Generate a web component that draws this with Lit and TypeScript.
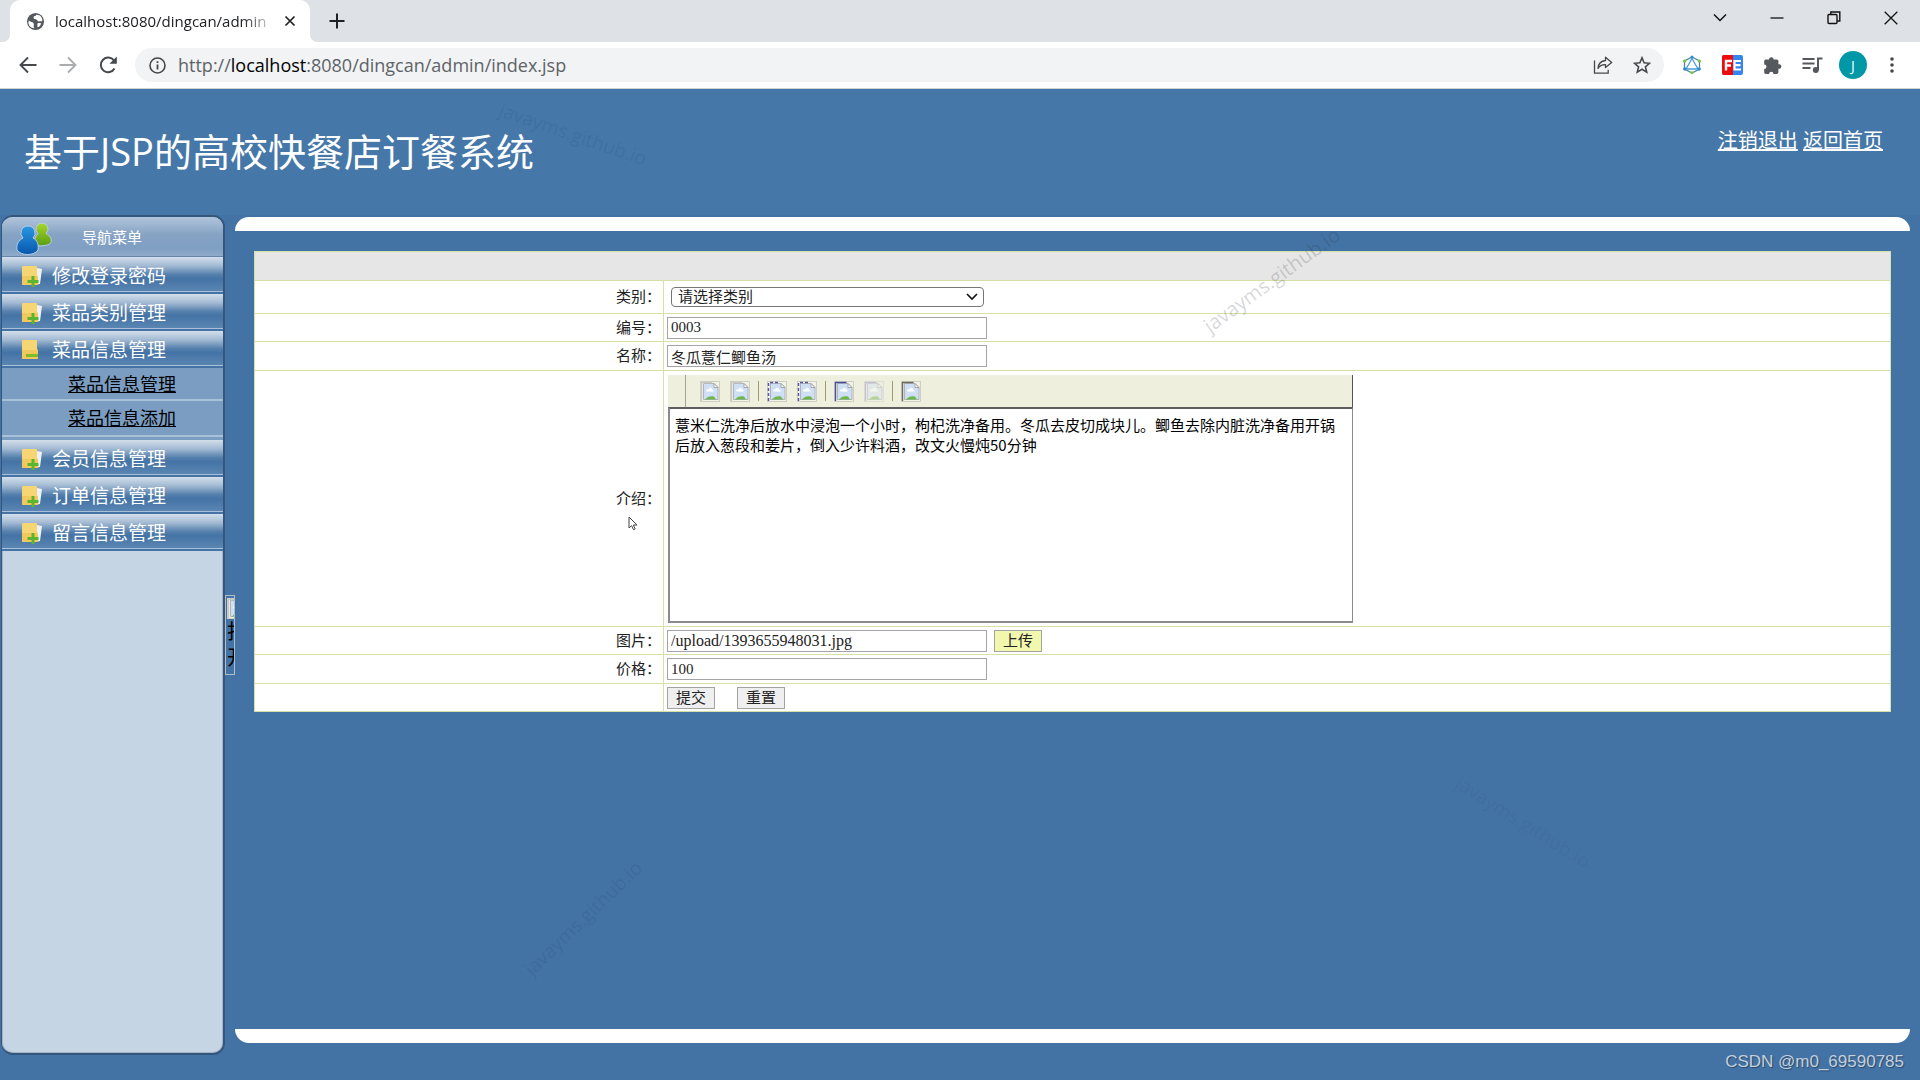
import { LitElement, html, css, svg, nothing } from "lit";
import { customElement, property } from "lit/decorators.js";

const sans = css`"Open Sans", "Noto Sans CJK SC", sans-serif`;

/* ---------- Browser frame ---------- */

@customElement("browser-bar")
class BrowserBar extends LitElement {
  static styles = css`
    :host { display: block; font-family: ${sans}; color: #202124; }
    button { border: 0; background: none; padding: 0; margin: 0; color: #45494d; display: grid; place-items: center; flex: none; font: inherit; }
    svg { display: block; }
    .tabs { height: 42px; background: #dee1e6; display: flex; align-items: stretch; padding: 0 1px 0 10px; }
    .tab { width: 300px; box-sizing: border-box; background: #fff; border-radius: 10px 10px 0 0; display: flex; align-items: center; padding: 0 14px 0 16px; position: relative; }
    .tab::before, .tab::after { content: ""; position: absolute; bottom: 0; width: 8px; height: 8px; }
    .tab::before { left: -8px; background: radial-gradient(circle at 0 0, transparent 8px, #fff 8px); }
    .tab::after { right: -8px; background: radial-gradient(circle at 100% 0, transparent 8px, #fff 8px); }
    .name { flex: 1; min-width: 0; margin: 0 8px 0 10px; font-size: 15px; line-height: 20px; white-space: nowrap; overflow: hidden;
      -webkit-mask-image: linear-gradient(90deg, #000 85%, transparent); mask-image: linear-gradient(90deg, #000 85%, transparent); }
    .dark { color: #202124; }
    .new { width: 54px; }
    .space { flex: 1; }
    .win { width: 57px; height: 36px; color: #111; }
    .tools { height: 46px; background: #fff; display: flex; align-items: center; border-bottom: 1px solid #cfd3d4; padding: 0 14px 0 12px; }
    .nav { width: 40px; margin-right: 0; height: 34px; }
    .nav.back { width: 32px; margin-right: 4px; }
    .off { color: #aaacae; }
    .address { flex: 1; height: 34px; border-radius: 17px; background: #f1f3f4; display: flex; align-items: center; padding: 0 12px 0 14px; margin: 0 8px 0 7px; }
    .url { flex: 1; margin-left: 13px; font-size: 18px; line-height: 24px; color: #606368; white-space: nowrap; }
    .url b { font-weight: 400; color: #000; }
    .address button { width: 40px; }
    .address .star { width: 20px; margin-left: 9px; }
    .address .info { width: 16px; }
    .ext { width: 40px; height: 34px; }
    .avatar { width: 28px; height: 28px; border-radius: 50%; background: #0097a7; color: #fff; font-size: 14px; margin: 0 7px; }
    .more { width: 20px; margin: 0 4px 0 8px; }
  `;
  render() {
    return html`
      <div class="tabs">
        <div class="tab">
          <svg width="19" height="19" viewBox="0 0 20 20"><circle cx="10" cy="10" r="9" fill="#55585d"/><path d="M3 9c2 2 4 1 5 3s-1 3 1 5c-4 0-6.500-3-6.500-6zM11 3c-1 2-3 1-3 3s3 1 4 3 3 0 5 1c1-4-2-7-6-7zM12 12c2-1 4 0 4 0-1 3-3 4-4 4z" fill="#fff"/></svg>
          <span class="name">localhost:8080/dingcan/admin</span>
          <button class="dark" aria-label="关闭标签页"><svg width="12" height="12" viewBox="0 0 12 12" stroke="currentColor" stroke-width="1.700"><path d="M1.500 1.500l9 9M10.500 1.500l-9 9"/></svg></button>
        </div>
        <button class="new dark" aria-label="新标签页"><svg width="16" height="16" viewBox="0 0 16 16" stroke="currentColor" stroke-width="2"><path d="M8 0.500v15M0.500 8h15"/></svg></button>
        <div class="space"></div>
        <button class="win" aria-label="搜索标签页"><svg width="14" height="10" viewBox="0 0 14 10" fill="none" stroke="currentColor" stroke-width="1.500"><path d="M1 1.500l6 6 6-6"/></svg></button>
        <button class="win" aria-label="最小化"><svg width="14" height="10" viewBox="0 0 14 10" stroke="currentColor" stroke-width="1.300"><path d="M0.500 5h13"/></svg></button>
        <button class="win" aria-label="还原"><svg width="14" height="14" viewBox="0 0 14 14" fill="none" stroke="currentColor" stroke-width="1.400"><rect x="1" y="3.500" width="9" height="9" rx="1"/><path d="M3.800 3.500V1h9v9h-2.600"/></svg></button>
        <button class="win" aria-label="关闭"><svg width="14" height="14" viewBox="0 0 14 14" stroke="currentColor" stroke-width="1.300"><path d="M0.700 0.700l12.600 12.600M13.300 0.700L0.700 13.300"/></svg></button>
      </div>
      <div class="tools">
        <button class="nav back" aria-label="后退"><svg width="18" height="18" viewBox="0 0 18 18" fill="none" stroke="currentColor" stroke-width="1.900"><path d="M17.500 9H2M9 1.500L1.500 9 9 16.500"/></svg></button>
        <button class="nav off" aria-label="前进"><svg width="18" height="18" viewBox="0 0 18 18" fill="none" stroke="currentColor" stroke-width="1.900"><path d="M0.500 9H16M9 1.500L16.500 9 9 16.500"/></svg></button>
        <button class="nav" aria-label="重新加载"><svg width="19" height="18" viewBox="0 0 19 18" fill="none" stroke="currentColor" stroke-width="2"><path d="M15.500 12.500A7.300 7.300 0 1 1 15 4.500"/><path d="M17.800 0.500v7.300h-7.300z" fill="currentColor" stroke="none"/></svg></button>
        <div class="address">
          <button class="info" aria-label="网站信息"><svg width="17" height="17" viewBox="0 0 17 17" fill="none" stroke="currentColor" stroke-width="1.600"><circle cx="8.500" cy="8.500" r="7.500"/><path d="M8.500 7.500v5M8.500 4.300v1.800" stroke-width="1.800"/></svg></button>
          <span class="url">http://<b>localhost</b>:8080/dingcan/admin/index.jsp</span>
          <button class="share" aria-label="分享"><svg width="20" height="18" viewBox="0 0 20 18" fill="none" stroke="currentColor" stroke-width="1.300"><path d="M1.500 4.500v12.700h13.700v-3.500"/><path d="M12.500 1.200L18.700 6.500l-6.200 5V8.700C9 8.500 6.800 9.500 5 12.500c.3-4.500 3-7.600 7.500-8z" stroke-linejoin="round"/></svg></button>
          <button class="star" aria-label="收藏"><svg width="18" height="18" viewBox="0 0 18 18" fill="none" stroke="currentColor" stroke-width="1.600"><path d="M9 1.800l2.100 5 5.400.5-4.100 3.500 1.300 5.300L9 13.300l-4.700 2.800 1.300-5.300L1.500 7.300l5.400-.5z"/></svg></button>
        </div>
        <button class="ext" aria-label="扩展 A"><svg width="20" height="20" viewBox="0 0 20 20" fill="none"><path d="M10 2l7.500 4v8L10 18l-7.500-4V6z" stroke="#4f8a9c" stroke-width="1.300"/><path d="M10 3.500L4 14h12z" stroke="#4a9ad8" stroke-width="1.300" fill="#fff"/><circle cx="10" cy="2" r="1.500" fill="#2a8bd8"/><circle cx="2.600" cy="6" r="1.600" fill="#6cc644"/><circle cx="17.400" cy="6" r="1.600" fill="#6cc644"/><circle cx="2.800" cy="14" r="1.700" fill="#2a8bd8"/><circle cx="17.200" cy="14" r="1.700" fill="#2a8bd8"/><path d="M7.500 16.500h5L10 19.500z" fill="#6cc644"/></svg></button>
        <button class="ext" aria-label="FE 助手"><svg width="21" height="20" viewBox="0 0 21 20"><rect width="21" height="20" rx="2" fill="#3385f0"/><path d="M2 0h9v20H2a2 2 0 0 1-2-2V2a2 2 0 0 1 2-2z" fill="#ee0b0b"/><path d="M4 15.500V6h6M4 10.500h5" stroke="#fff" stroke-width="2.400" fill="none"/><path d="M19 6h-6.500v8.500H19M12.500 10.200h6" stroke="#fff" stroke-width="2.200" fill="none"/></svg></button>
        <button class="ext" aria-label="扩展程序"><svg width="19" height="19" viewBox="0 0 19 19"><path d="M6 3.500a2.300 2.300 0 0 1 4.600 0h3.200a1.600 1.600 0 0 1 1.600 1.600v3.100h.7a2.300 2.300 0 0 1 0 4.600h-.7v3.500a1.600 1.600 0 0 1-1.600 1.600h-3.300a2.200 2.200 0 0 0-4.400 0H2.800a1.600 1.600 0 0 1-1.600-1.600v-3.200a2.300 2.300 0 0 0 0-4.600V5.100a1.600 1.600 0 0 1 1.600-1.600z" fill="#55585d"/></svg></button>
        <button class="ext" aria-label="媒体控制"><svg width="21" height="18" viewBox="0 0 21 18" fill="none" stroke="#55585d" stroke-width="2"><path d="M0.500 3h12M0.500 7.500h12M0.500 12h8M16 14V2.500h4.500"/><circle cx="13.800" cy="14" r="3" fill="#55585d" stroke="none"/></svg></button>
        <button class="avatar" aria-label="用户">J</button>
        <button class="more" aria-label="更多"><svg width="4" height="16" viewBox="0 0 4 16" fill="#45494d"><circle cx="2" cy="2" r="1.800"/><circle cx="2" cy="8" r="1.800"/><circle cx="2" cy="14" r="1.800"/></svg></button>
      </div>`;
  }
}

/* ---------- Side navigation ---------- */

interface MenuGroup { label: string; children?: string[]; }

const menu: MenuGroup[] = [
  { label: "修改登录密码" },
  { label: "菜品类别管理" },
  { label: "菜品信息管理", children: ["菜品信息管理", "菜品信息添加"] },
  { label: "会员信息管理" },
  { label: "订单信息管理" },
  { label: "留言信息管理" },
];

@customElement("side-menu")
class SideMenu extends LitElement {
  static styles = css`
    :host { display: flex; font-family: ${sans}; }
    .panel { flex: 1; display: flex; flex-direction: column; box-sizing: border-box; border: 2px solid #34557c; border-left-width: 1px; border-radius: 12px; background: #c6d5e3; overflow: hidden; box-shadow: inset 0 0 0 1px #a3b4c6; }
    .head { height: 39px; display: flex; align-items: center; background: linear-gradient(#b1c5db, #86a3c4 45%, #7f9fc3 80%, #8fabc9); color: #fff; font-size: 15px; line-height: 20px; padding-left: 11px; border-bottom: 1px solid #6584a8; margin: 0; font-weight: 400; }
    .head svg { margin-right: 29px; }
    .item { width: 100%; height: 37px; box-sizing: border-box; border: 0; border-bottom: 2px solid #4673a5; box-shadow: inset 0 -1px #a9c0d8; background: linear-gradient(#d3dfeb, #a3bad3 25%, #5580ad 50%, #4473a5 62%, #5c87b3); display: flex; align-items: center; padding: 2px 0 0 17px; font: 19px/24px ${sans}; color: #fff; gap: 8px; text-align: left; }
    .subs { list-style: none; margin: 0; padding: 0 0 3px; background: #7b9dc2; }
    .subs li { height: 33px; display: flex; align-items: center; padding-left: 66px; border-bottom: 2px solid #a9c0d9; box-sizing: border-box; }
    .subs li + li { height: 36px; }
    .subs a { color: #000; font-size: 18px; line-height: 24px; }
    nav ul { list-style: none; margin: 0; padding: 0; }
    svg { display: block; flex: none; }
  `;
  private folder(open: boolean) {
    return html`<svg width="25" height="24" viewBox="0 0 25 24">
      ${open ? nothing : svg`<path d="M18 4l5 1-2 15-6 1z" fill="#eef2f7"/>`}
      <path d="M3 3a1 1 0 0 1 1-1h13a1 1 0 0 1 1 1v8l1 1v8a1 1 0 0 1-1 1H4a1 1 0 0 1-1-1z" fill="#f6d573"/>
      <path d="M3 12h15l1 1v7a1 1 0 0 1-1 1H4a1 1 0 0 1-1-1z" fill="#edbf4d" opacity="0.600"/>
      ${open ? svg`<path d="M7 16h12v3H7z" fill="#7fbb2b"/>` : svg`<path d="M12.500 12h3v4h4v3h-4v4h-3v-4h-4v-3h4z" fill="#5cb531"/>`}
    </svg>`;
  }
  render() {
    return html`<div class="panel">
      <h2 class="head">
        <svg width="40" height="36" viewBox="0 0 40 36">
          <defs>
            <linearGradient id="g" x1="0" y1="0" x2="0" y2="1"><stop offset="0" stop-color="#a6d62c"/><stop offset="1" stop-color="#5a9e12"/></linearGradient>
            <linearGradient id="b" x1="0" y1="0" x2="0" y2="1"><stop offset="0" stop-color="#2a97e2"/><stop offset="1" stop-color="#0757ad"/></linearGradient>
          </defs>
          <g stroke="#b7cde4" stroke-width="1">
            <path d="M29 4a6 6 0 0 1 4 10.500c4 2 6 5 5 9-3 4-13 4-17 2 0-5 2-9 4-11A6 6 0 0 1 29 4z" fill="url(#g)"/>
            <path d="M15 7a7 7 0 0 1 5 12c4 2 6 6 5 12-4 6-17 6-21 0-1-6 2-10 6-12A7 7 0 0 1 15 7z" fill="url(#b)"/>
          </g>
        </svg>导航菜单</h2>
      <nav><ul>${menu.map((g) => html`<li>
        <button class="item">${this.folder(!!g.children)}${g.label}</button>
        ${g.children ? html`<ul class="subs">${g.children.map((c) => html`<li><a href="#">${c}</a></li>`)}</ul>` : nothing}
      </li>`)}</ul></nav>
    </div>`;
  }
}

/* ---------- Placeholder picture ---------- */

@customElement("broken-picture")
class BrokenPicture extends LitElement {
  @property({ type: String }) edge = "#c9cbc3";
  static styles = css`:host { display: block; } svg { display: block; }`;
  render() {
    return html`<svg width="20" height="21" viewBox="0 0 20 21">
      <rect x="0.500" y="0.500" width="19" height="20" fill="#f1f1e6" stroke="#cfd0c4"/>
      <path d="M3.500 2.500h10.500l4 4v12h-14.500z" fill="#cfe0f6" stroke="#b0b3b8"/>
      <path d="M1.500 20V1.500h11" fill="none" stroke=${this.edge} stroke-width="1.400" stroke-dasharray=${this.edge === "#5a55a8" ? "3 2" : "none"}/>
      <path d="M14 2.500v4h4z" fill="#fff" stroke="#a4a7ab"/>
      <path d="M6 10c0-2 2-2 2.500-1.500C9 6 12 6.500 12 8.500c2 0 2 2 1 2H7z" fill="#fff"/>
      <path d="M5 18.500c2-3 6-4 9-3l2 3z" fill="#6cb84e"/>
    </svg>`;
  }
}

/* ---------- Dish form ---------- */

@customElement("dish-form")
class DishForm extends LitElement {
  static styles = css`
    :host { display: block; }
    table { width: 100%; border-collapse: collapse; background: #fff; color: #222; font: 15px/18px "Liberation Serif", "Noto Sans CJK SC", serif; }
    th, td { border: 1px solid #d5e0a5; padding: 2px 2px 2px 3px; font-weight: 400; box-sizing: border-box; height: 29px; }
    thead th { background: #e6e6e6; }
    tbody th { width: 25%; text-align: right; }
    .wide td { height: 33px; padding-left: 7px; }
    .short th, .short td { height: 28px; }
    .line { display: flex; align-items: center; }
    input, select, button { font: inherit; color: #222; box-sizing: border-box; border-radius: 0; margin: 0; }
    input { width: 320px; height: 22px; border: 1px solid #a5a5a8; padding: 0 3px; background: #fff; }
    .path { font-size: 16px; margin-right: 7px; }
    .pick { position: relative; display: inline-block; vertical-align: middle; }
    select { display: block; width: 313px; height: 20px; border: 1px solid #767676; border-radius: 4px; background: #fff; appearance: none; padding: 0 6px; }
    .pick svg { position: absolute; right: 6px; top: 6px; pointer-events: none; }
    button { width: 48px; height: 22px; border: 1px solid #a3a3a3; background: #efefef; padding: 0; }
    .upload { background: #f2f7ae; }
    .reset { margin-left: 22px; }
    .tall td { padding: 4px 3px 3px 4px; }
    .editor { width: 685px; max-width: 100%; }
    .bar { height: 32px; display: flex; align-items: center; background: #efefde; border-right: 1px solid #555; box-sizing: border-box; padding-left: 17px; }
    .grip { align-self: stretch; width: 1px; background: #a3a397; margin-right: 14px; }
    .bar button { width: 20px; height: 21px; border: 0; background: none; }
    .bar button + button { margin-left: 10px; }
    .sep { width: 1px; height: 20px; background: #a29c68; margin: 0 8px; }
    .faded { opacity: 0.450; }
    textarea { display: block; width: 100%; height: 216px; box-sizing: border-box; margin: 0; border: 2px solid #8b8b8e; border-top-color: #5e5e5e; border-right-width: 1px; resize: none; padding: 6px 15px 6px 5px; font: 15px/20px "Noto Sans CJK SC", sans-serif; color: #000; background: #fff; outline: 0; }
  `;
  render() {
    const pic = (name: string, edge?: string, cls = "") => html`<button class=${cls} aria-label=${name}><broken-picture edge=${edge ?? "#c9cbc3"}></broken-picture></button>`;
    const sep = html`<span class="sep"></span>`;
    return html`<table>
      <thead><tr><th colspan="2"></th></tr></thead>
      <tbody>
        <tr class="wide"><th><label for="kind">类别：</label></th><td><span class="pick"><select id="kind"><option>请选择类别</option></select>
          <svg width="12" height="8" viewBox="0 0 12 8" fill="none" stroke="#111" stroke-width="1.600"><path d="M1 1l5 5 5-5"/></svg></span></td></tr>
        <tr class="short"><th><label for="code">编号：</label></th><td><div class="line"><input id="code" .value=${"0003"}></div></td></tr>
        <tr><th><label for="name">名称：</label></th><td><div class="line"><input id="name" .value=${"冬瓜薏仁鲫鱼汤"}></div></td></tr>
        <tr class="tall"><th><label for="intro">介绍：</label></th><td><div class="editor">
          <div class="bar"><span class="grip"></span>${pic("剪切")}${pic("复制")}${sep}${pic("编号列表", "#5a55a8")}${pic("项目列表", "#5a55a8")}${sep}${pic("链接", "#4a4f9a")}${pic("取消链接", "#8a8fca", "faded")}${sep}${pic("图片", "#6d6a5a")}</div>
          <textarea id="intro" spellcheck="false" .value=${"薏米仁洗净后放水中浸泡一个小时，枸杞洗净备用。冬瓜去皮切成块儿。鲫鱼去除内脏洗净备用开锅后放入葱段和姜片，倒入少许料酒，改文火慢炖50分钟"}></textarea>
        </div></td></tr>
        <tr class="short"><th><label for="file">图片：</label></th><td><div class="line"><input class="path" id="file" .value=${"/upload/1393655948031.jpg"}><button class="upload">上传</button></div></td></tr>
        <tr><th><label for="price">价格：</label></th><td><div class="line"><input id="price" .value=${"100"}></div></td></tr>
        <tr class="short"><th></th><td><div class="line"><button>提交</button><button class="reset">重置</button></div></td></tr>
      </tbody>
    </table>`;
  }
}

/* ---------- Page ---------- */

@customElement("app-root")
class AppRoot extends LitElement {
  static styles = css`
    :host { display: flex; flex-direction: column; min-height: 100vh; position: relative; overflow: hidden; background: #4373a5; font-family: ${sans}; }
    header { display: flex; justify-content: space-between; align-items: flex-start; height: 126px; box-sizing: border-box; background: #4578a9; color: #fff; padding: 34px 37px 0 24px; }
    h1 { margin: 0; font-size: 38px; line-height: 56px; font-weight: 400; }
    .links { font-size: 20px; line-height: 36px; }
    .links a { color: #fff; }
    .body { flex: 1; display: flex; padding: 0 10px 25px 1px; }
    side-menu { width: 224px; flex: none; }
    .split { width: 10px; height: 80px; align-self: center; box-sizing: border-box; border: 1px solid #b5bcc2; background: none; padding: 2px 0 0 1px; overflow: hidden; color: #000; font: 20px/26px ${sans}; display: flex; flex-direction: column; align-items: flex-start; white-space: nowrap; }
    .split span { width: 20px; white-space: normal; text-align: left; }
    main { flex: 1; min-width: 0; display: flex; flex-direction: column; padding: 2px 0 12px; }
    .cap { height: 14px; background: #fff; flex: none; }
    .top { border-radius: 14px 14px 0 0; }
    .bottom { border-radius: 0 0 14px 14px; }
    .content { flex: 1; padding: 20px 19px; }
    .mark { position: absolute; font: 19px/24px ${sans}; color: rgba(30, 50, 80, 0.120); white-space: nowrap; pointer-events: none; transform: translate(-50%, -50%) rotate(var(--turn)); }
    .m1 { left: 573px; top: 134px; --turn: 19deg; }
    .m2 { left: 1272px; top: 280px; --turn: -36deg; font-size: 20px; color: rgba(50, 50, 60, 0.200); }
    .m3 { left: 583px; top: 918px; --turn: -44deg; }
    .m4 { left: 1523px; top: 822px; --turn: 32deg; color: rgba(30, 50, 80, 0.080); }
    .credit { position: absolute; right: 16px; bottom: 8px; font: 17px/20px "Liberation Sans", sans-serif; color: #c3cfdb; text-shadow: 1px 1px 1px #2b4a6c; }
    .cursor { position: absolute; left: 628px; top: 516px; }
  `;
  render() {
    return html`
      <browser-bar></browser-bar>
      <header>
        <h1>基于JSP的高校快餐店订餐系统</h1>
        <div class="links"><a href="#">注销退出</a> <a href="#">返回首页</a></div>
      </header>
      <div class="body">
        <side-menu></side-menu>
        <button class="split" aria-label="打开"><broken-picture></broken-picture><span>打开</span></button>
        <main>
          <div class="cap top"></div>
          <div class="content"><dish-form></dish-form></div>
          <div class="cap bottom"></div>
        </main>
      </div>
      ${[1, 2, 3, 4].map((n) => html`<span class="mark m${n}">javayms.github.io</span>`)}
      <svg class="cursor" width="10" height="15" viewBox="0 0 10 15"><path d="M1 1v11l2.600-2.300 1.900 4 1.700-.8-1.900-3.900H9z" fill="#fff" stroke="#444"/></svg>
      <span class="credit">CSDN @m0_69590785</span>`;
  }
}
